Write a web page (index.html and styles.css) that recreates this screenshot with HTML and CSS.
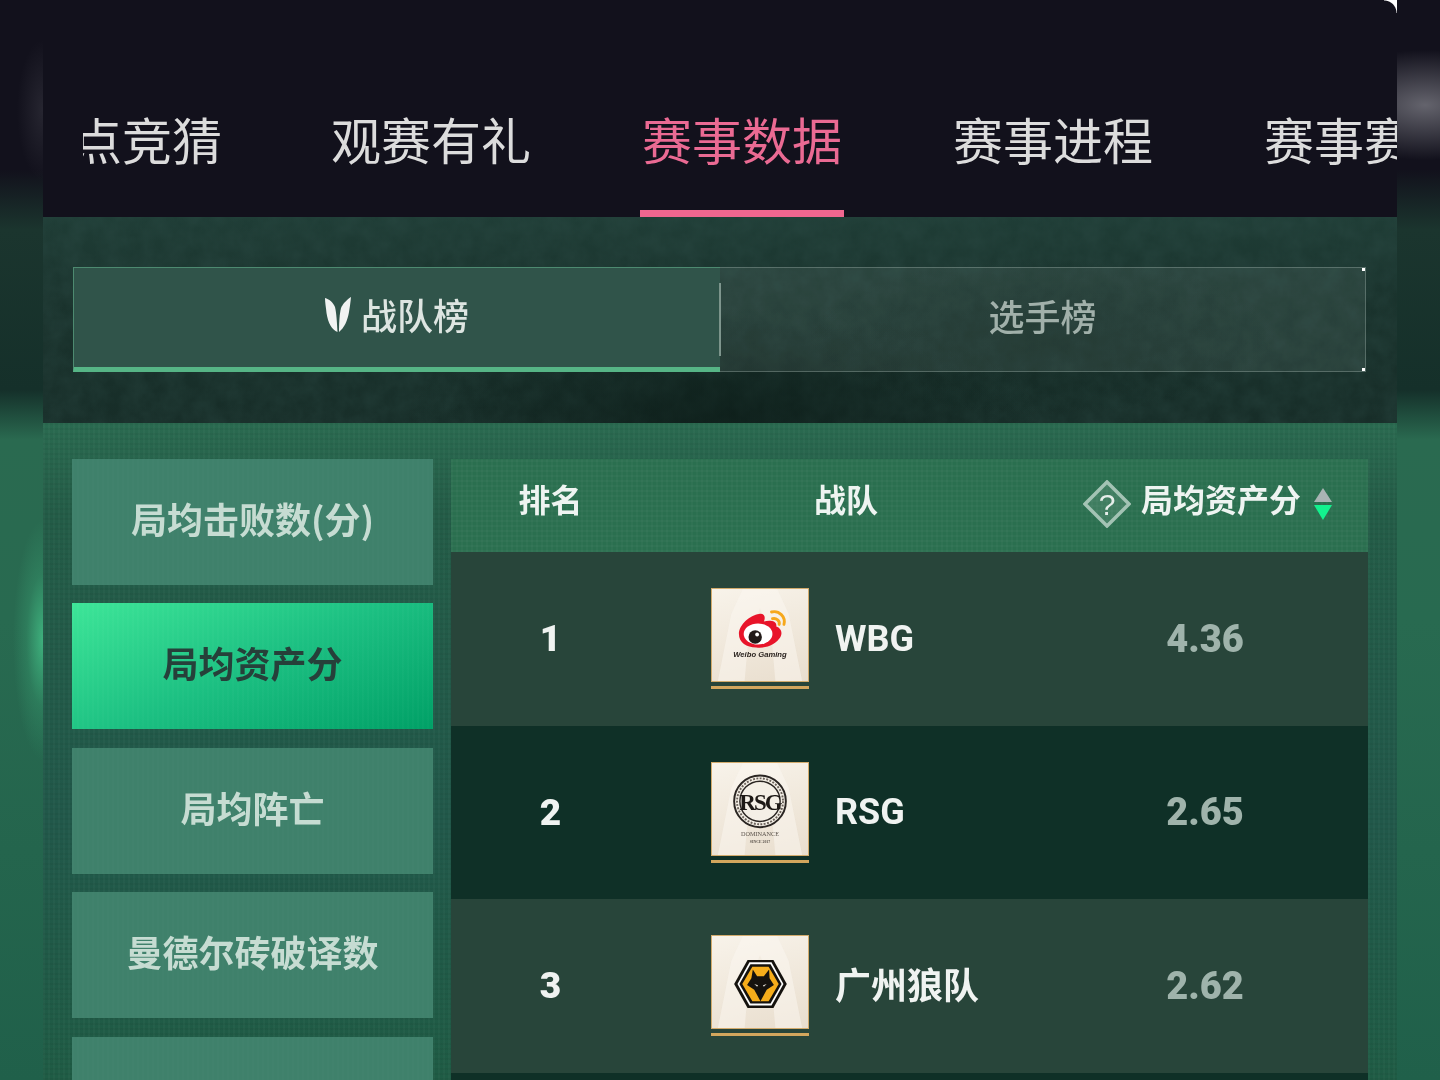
FILE: index.html
```html
<!DOCTYPE html>
<html lang="zh-CN">
<head>
<meta charset="utf-8">
<title>赛事数据</title>
<link rel="stylesheet" href="styles.css">
</head>
<body>
<div class="stage">
  <div class="app">
    <nav class="nav">
      <a class="nav-item nav-first">点竞猜</a>
      <a class="nav-item">观赛有礼</a>
      <a class="nav-item is-active">赛事数据</a>
      <a class="nav-item">赛事进程</a>
      <a class="nav-item">赛事赛程</a>
    </nav>
    <section class="switch-band">
      <div class="switch">
        <div class="switch-tab is-on">
          <svg class="v-mark" viewBox="0 0 26 36" aria-hidden="true"><path d="M0 1C4 2 8 5 10 10C11.500 16 12 26 12.500 35C7 33 3 26 1.500 16C1 10 0 6 0 1Z"/><path d="M26 0C23 2 18 6 16 11C14.500 17 14 26 14 35C19 31 22.500 24 24 15C25 9 25.500 5 26 0Z"/></svg>
          <span>战队榜</span>
        </div>
        <div class="switch-tab is-off"><span>选手榜</span></div>
      </div>
    </section>
    <section class="board">
      <aside class="metrics">
        <div class="metric">局均击败数(分)</div>
        <div class="metric is-current">局均资产分</div>
        <div class="metric">局均阵亡</div>
        <div class="metric">曼德尔砖破译数</div>
        <div class="metric"></div>
      </aside>
      <div class="table">
        <div class="thead">
          <div class="cell">排名</div>
          <div class="cell">战队</div>
          <div class="cell value-head">
            <svg class="help" viewBox="0 0 48 48" aria-hidden="true"><path class="help-box" d="M24 2L46 24L24 46L2 24Z"/></svg>
            <span class="help-q">?</span>
            <span class="value-label">局均资产分</span>
            <span class="sort"><i class="sort-up"></i><i class="sort-down"></i></span>
          </div>
        </div>
        <div class="row">
          <div class="rank">1</div>
          <div class="team">
            <div class="badge">
              <svg viewBox="0 0 96 96">
                <path class="halo" d="M30 0L18 26L4 96H32L36 50L48 20L60 50L64 96H92L78 26L66 0Z"/>
                <path fill="#e8142a" d="M26 47C26 37 38 27 47 26C53 25 54 30 52 34C58 32 66 33 65 39C71 41 72 47 68 52C62 60 52 62 44 61C34 61 26 56 26 47Z"/>
                <ellipse cx="46" cy="47" rx="15" ry="11" fill="#fff"/>
                <circle cx="43" cy="50" r="7" fill="#221a18"/>
                <circle cx="45" cy="47.500" r="2" fill="#fff"/>
                <path d="M60 24C68 22 75 29 73 37M61 31C65 30 69 33 68 37" fill="none" stroke="#f6a81c" stroke-width="3" stroke-linecap="round"/>
                <text class="wb-text" x="48" y="71">Weibo Gaming</text>
              </svg>
            </div>
            <span class="team-name">WBG</span>
          </div>
          <div class="score">4.36</div>
        </div>
        <div class="row row-dark">
          <div class="rank">2</div>
          <div class="team">
            <div class="badge">
              <svg viewBox="0 0 96 96">
                <path class="halo" d="M30 0L18 26L4 96H32L36 50L48 20L60 50L64 96H92L78 26L66 0Z"/>
                <circle cx="48" cy="40" r="27" fill="#f4efe6" stroke="#2a2522" stroke-width="2"/>
                <circle cx="48" cy="40" r="21" fill="none" stroke="#2a2522" stroke-width="1.500"/>
                <circle cx="48" cy="40" r="24" fill="none" stroke="#6b625b" stroke-width="2" stroke-dasharray="2 1.500"/>
                <text class="rsg-text" x="48" y="49">RSG</text>
                <text class="rsg-small" x="48" y="76">DOMINANCE</text>
                <text class="rsg-tiny" x="48" y="83">SINCE 2017</text>
              </svg>
            </div>
            <span class="team-name">RSG</span>
          </div>
          <div class="score">2.65</div>
        </div>
        <div class="row">
          <div class="rank">3</div>
          <div class="team">
            <div class="badge">
              <svg viewBox="0 0 96 96">
                <path class="halo" d="M30 0L18 26L4 96H32L36 50L48 20L60 50L64 96H92L78 26L66 0Z"/>
                <path fill="#15120e" d="M21 50L35 25H62L76 50L62 75H35Z"/>
                <path fill="#fff" d="M24.500 50L37 27.500H60L72.500 50L60 72.500H37Z"/>
                <path fill="#15120e" d="M26.500 50L38 29.500H59L70.500 50L59 70.500H38Z"/>
                <path fill="#f6ad1b" d="M29.500 50L40 32H57L67.500 50L57 68H40Z"/>
                <path fill="#15120e" d="M40.500 35L45 42H52L57.500 35L58 44L62.500 51L55 56L48.500 68L42 56L34.500 51L39 44Z"/>
                <path fill="#d8d4cc" d="M42 50L46 51.500L45 53ZM55 50L51 51.500L52 53Z"/>
              </svg>
            </div>
            <span class="team-name team-name-cjk">广州狼队</span>
          </div>
          <div class="score">2.62</div>
        </div>
        <div class="row row-dark"></div>
      </div>
    </section>
  </div>
</div>
</body>
</html>
```
FILE: styles.css
```css
* { box-sizing: border-box; }
html, body { margin: 0; padding: 0; }
body { background: #12111c; font-family: "Noto Sans CJK SC", "Noto Sans", sans-serif; }

.stage {
  width: 1440px;
  height: 1080px;
  overflow: hidden;
  padding: 0 43px;
  background:
    radial-gradient(ellipse 30px 120px at 43px 640px, rgba(70, 200, 140, .75), rgba(70, 200, 140, .2) 55%, transparent),
    radial-gradient(ellipse 26px 70px at 43px 110px, rgba(120, 120, 130, .2), transparent),
    radial-gradient(ellipse 110px 55px at 1425px 105px, rgba(150, 150, 158, .62), transparent),
    linear-gradient(180deg, #12111c 0, #12111c 170px, #1b352e 230px, #15302a 390px, #2a6a50 440px, #286a50 620px, #20604a 1080px);
}

.app { position: relative; width: 1354px; height: 1080px; overflow: hidden; filter: blur(.6px); }
.app::after {
  content: "";
  position: absolute;
  top: 0;
  right: 0;
  width: 13px;
  height: 13px;
  background: radial-gradient(circle at 0 100%, transparent 12px, #fff 13px);
}

.nav {
  display: flex;
  gap: 107px;
  height: 217px;
  padding-left: 40px;
  background: #12111c;
  overflow: hidden;
}
.nav-item {
  flex: none;
  height: 217px;
  padding: 102px 2px 0 2px;
  border-bottom: 7px solid transparent;
  color: #dcdcdc;
  font-size: 50px;
  line-height: 72px;
  white-space: nowrap;
}
.nav-first { width: 139px; padding-left: 0; overflow: hidden; text-indent: -11px; }
.nav-item.is-active { color: #ea6a93; border-bottom-color: #f0668f; }

.switch-band {
  height: 206px;
  padding: 50px 31px 0 30px;
  background:
    radial-gradient(ellipse 320px 110px at 680px 200px, rgba(8, 22, 18, .6), transparent),
    radial-gradient(ellipse 240px 80px at 1000px 120px, rgba(10, 28, 22, .3), transparent),
    url("data:image/svg+xml,%3Csvg xmlns='http://www.w3.org/2000/svg' width='1354' height='206'%3E%3Cfilter id='n'%3E%3CfeTurbulence type='fractalNoise' baseFrequency='.05' numOctaves='5'/%3E%3CfeColorMatrix values='0 0 0 0 .03 0 0 0 0 .08 0 0 0 0 .07 0 0 0 .5 -.12'/%3E%3C/filter%3E%3Crect width='1354' height='206' filter='url(%23n)'/%3E%3C/svg%3E"),
    linear-gradient(180deg, #1f3d36 0, #1a332d 40%, #172d28 100%);
}
.switch { display: grid; grid-template-columns: 647px 646px; height: 105px; }
.switch-tab {
  position: relative;
  display: flex;
  align-items: center;
  justify-content: center;
  gap: 10px;
  font-size: 36px;
  font-weight: 500;
  line-height: 50px;
}
.switch-tab.is-on {
  padding-bottom: 7px;
  background: #30544a;
  border-top: 1px solid #4d8a70;
  border-left: 1px solid #4d8a70;
  border-bottom: 5px solid #56b586;
  color: #dde5e1;
}
.switch-tab.is-on::after {
  content: "";
  position: absolute;
  top: 15px;
  right: -1px;
  width: 2px;
  height: 73px;
  background: #7c948b;
}
.switch-tab.is-off {
  padding-bottom: 10px;
  background:
    linear-gradient(#fff, #fff) right top / 3px 3px no-repeat,
    linear-gradient(#fff, #fff) right bottom / 3px 3px no-repeat,
    rgba(150, 170, 165, .13);
  border-top: 1px solid rgba(190, 205, 200, .3);
  border-right: 1px solid rgba(190, 205, 200, .3);
  border-bottom: 1px solid rgba(190, 205, 200, .3);
  color: #a1b0aa;
}
.v-mark { width: 26px; height: 36px; fill: #f1f3f2; flex: none; margin-top: 2px; }

.board {
  display: flex;
  gap: 18px;
  height: 657px;
  padding: 36px 29px 0;
  background:
    repeating-linear-gradient(90deg, rgba(255, 255, 255, .025) 0 2px, transparent 2px 5px),
    repeating-linear-gradient(0deg, rgba(0, 0, 0, .04) 0 2px, transparent 2px 5px),
    linear-gradient(180deg, #2a6a50 0, #235c47 90px, #21584a 400px, #1f5c45 100%);
}
.metrics { display: flex; flex-direction: column; gap: 18.400px; width: 361px; flex: none; }
.metric {
  flex: none;
  display: flex;
  align-items: center;
  justify-content: center;
  height: 126px;
  padding-bottom: 8px;
  background:
    repeating-linear-gradient(90deg, rgba(255, 255, 255, .012) 0 2px, transparent 2px 5px),
    #3f816b;
  color: #c6dcd2;
  font-size: 36px;
  font-weight: 700;
  line-height: 50px;
}
.metric.is-current {
  background:
    repeating-linear-gradient(90deg, rgba(255, 255, 255, .02) 0 2px, transparent 2px 5px),
    linear-gradient(155deg, #3de598 0, #1cc082 50%, #00a066 100%);
  color: #26403a;
}

.table { width: 917px; flex: none; }
.thead {
  display: grid;
  grid-template-columns: 199px 392px 326px;
  height: 93px;
  align-items: center;
  background:
    repeating-linear-gradient(90deg, rgba(255, 255, 255, .025) 0 2px, transparent 2px 5px),
    repeating-linear-gradient(0deg, rgba(255, 255, 255, .025) 0 2px, transparent 2px 5px),
    #2a6f4f;
  color: #eef4f1;
  font-size: 32px;
  font-weight: 700;
  line-height: 44px;
}
.cell { text-align: center; padding-bottom: 16px; }
.value-head {
  position: relative;
  display: flex;
  align-items: center;
  gap: 10px;
  padding: 0 0 0 41px;
  font-size: 32px;
  margin-top: -13px;
  text-align: left;
}
.value-label { padding-bottom: 2px; }
.help { width: 48px; height: 48px; flex: none; margin-top: 10px; }
.help-box { fill: rgba(255, 255, 255, .1); stroke: #a3c3b4; stroke-width: 3.500; }
.help-q {
  position: absolute;
  left: 41px;
  top: 1px;
  width: 48px;
  text-align: center;
  color: #e6eeea;
  font-family: "Liberation Sans", sans-serif;
  font-size: 30px;
  font-weight: 400;
  line-height: 48px;
  margin-top: 10px;
}
.sort { display: flex; flex-direction: column; gap: 3px; margin: 10px 0 0 3px; }
.sort i { display: block; width: 0; height: 0; border-left: 9px solid transparent; border-right: 9px solid transparent; }
.sort-up { border-bottom: 14px solid #a9b4b4; }
.sort-down { border-top: 15px solid #13f28e; }

.row {
  display: grid;
  grid-template-columns: 199px 392px 326px;
  align-items: center;
  height: 173.500px;
  background: #28453a;
  font-family: Roboto, "Noto Sans CJK SC", sans-serif;
  font-weight: 700;
}
.row-dark { background: #0f3027; }
.rank { text-align: center; color: #f0f3f1; font-size: 37px; font-weight: 900; }
.team { display: flex; align-items: center; gap: 26px; padding-left: 61px; }
.team-name {
  color: #f0f3f1;
  font-family: Roboto, "Noto Sans CJK SC", sans-serif;
  font-size: 36px;
  white-space: nowrap;
}
.team-name-cjk { margin-bottom: 6px; }
.score { text-align: center; color: #9fb3ab; font-size: 38px; font-weight: 900; }

.badge {
  flex: none;
  width: 98px;
  height: 101px;
  padding-bottom: 4px;
  border-bottom: 3px solid #d3a65d;
}
.badge svg {
  display: block;
  width: 98px;
  height: 94px;
  background: linear-gradient(165deg, #f8f3ea 0, #e9dece 100%);
  border: 1px solid #d3ab6c;
}
.halo { fill: #fbf8f1; opacity: .5; }
.wb-text { font: italic 700 8px "Liberation Sans", sans-serif; fill: #2b2420; text-anchor: middle; }
.rsg-text { font: 700 24px "Liberation Serif", serif; fill: #1d1916; text-anchor: middle; letter-spacing: -2px; }
.rsg-small { font: 400 6.500px "Liberation Serif", serif; fill: #5a524b; text-anchor: middle; }
.rsg-tiny { font: 700 4px "Liberation Serif", serif; fill: #5a524b; text-anchor: middle; }
```
